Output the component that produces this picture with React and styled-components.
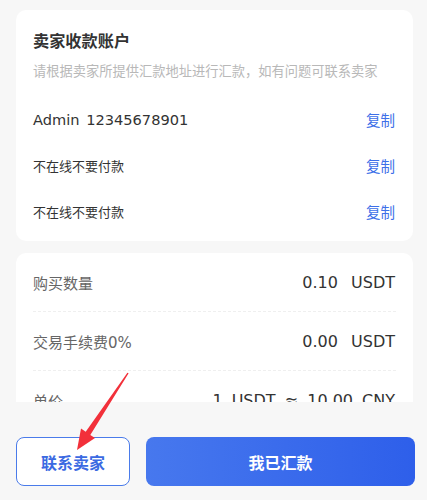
import React from "react";
import styled, { createGlobalStyle } from "styled-components";

const Global = createGlobalStyle`
  html, body { margin: 0; padding: 0; background: #f7f7f7; }
  body { font-family: "DejaVu Sans", "Noto Sans CJK SC", sans-serif; }
  * { box-sizing: border-box; }
`;

const Page = styled.div`
  position: relative;
  width: 427px;
  height: 500px;
  background: #f7f7f7;
  overflow: hidden;
`;

const Scroll = styled.div`
  height: 402px;
  overflow: hidden;
  padding: 10px 14px 0 16px;
  display: flex;
  flex-direction: column;
  gap: 12px;
`;

const Card = styled.div`
  background: #fff;
  border-radius: 10px;
  padding: ${(p) => p.$pad || "0 17px"};
  flex-shrink: 0;
`;

const Title = styled.div`
  font-family: "Noto Sans CJK SC", sans-serif;
  font-size: 16.2px;
  font-weight: 700;
  color: #333;
  line-height: 24px;
`;

const Sub = styled.div`
  font-family: "Noto Sans CJK SC", sans-serif;
  margin-top: 10px;
  margin-bottom: 16px;
  font-size: 13.25px;
  color: #b8b8b8;
  line-height: 18px;
  white-space: nowrap;
`;

const AccRow = styled.div`
  height: 46px;
  display: flex;
  align-items: center;
  justify-content: space-between;
`;

const AccText = styled.span`
  font-size: ${(p) => p.$size || "13px"};
  color: #333;
  word-spacing: ${(p) => p.$ws || "0"};
`;

const Copy = styled.span`
  font-family: "Noto Sans CJK SC", sans-serif;
  font-size: 14.5px;
  color: #3d6fe8;
  margin-right: 1px;
`;

const InfoRow = styled.div`
  height: 59px;
  display: flex;
  align-items: center;
  justify-content: space-between;
  border-bottom: 1px dashed #efefef;
`;

const Label = styled.span`
  font-size: 15px;
  color: #666;
`;

const Value = styled.span`
  font-size: 16px;
  color: #333;
  word-spacing: ${(p) => p.$ws};
  margin-right: 1px;
`;

const Footer = styled.div`
  padding: 35px 12px 0 16px;
  display: flex;
  gap: 16px;
`;

const Btn = styled.button`
  height: 49px;
  border-radius: 8px;
  font-family: "Noto Sans CJK SC", sans-serif;
  font-size: 16px;
  font-weight: 700;
  display: flex;
  align-items: center;
  justify-content: center;
  cursor: pointer;
  ${(p) =>
    p.$primary
      ? `flex: 1; border: none; color: #fff; background: linear-gradient(90deg, #4778ee, #2e5fea);`
      : `width: 114px; border: 1px solid #4a7bea; color: #3b6ae2; background: #fff;`}
`;

const Overlay = styled.svg`
  position: absolute;
  left: 0;
  top: 0;
  pointer-events: none;
`;

const accounts = [
  { text: "Admin 12345678901", size: "14.6px", ws: "2px" },
  { text: "不在线不要付款" },
  { text: "不在线不要付款" },
];

const infos = [
  ["购买数量", "0.10 USDT", "8px"],
  ["交易手续费0%", "0.00 USDT", "8px"],
  ["单价", "1 USDT ≈ 10.00 CNY", "4px"],
];

export default function App() {
  return (
    <Page>
      <Global />
      <Scroll>
        <Card $pad="18px 17px 7px">
          <Title>卖家收款账户</Title>
          <Sub>请根据卖家所提供汇款地址进行汇款，如有问题可联系卖家</Sub>
          {accounts.map((a, i) => (
            <AccRow key={i}>
              <AccText $size={a.size} $ws={a.ws}>{a.text}</AccText>
              <Copy>复制</Copy>
            </AccRow>
          ))}
        </Card>
        <Card>
          {infos.map(([l, v, ws]) => (
            <InfoRow key={l}>
              <Label>{l}</Label>
              <Value $ws={ws}>{v}</Value>
            </InfoRow>
          ))}
        </Card>
      </Scroll>
      <Footer>
        <Btn>联系卖家</Btn>
        <Btn $primary>我已汇款</Btn>
      </Footer>
      <Overlay width="427" height="500" viewBox="0 0 427 500">
        <polygon
          points="128.6,373.3 90.3,434.9 95,438 77,450 81,428.6 85.7,431.7 127.4,372.7"
          fill="#f2303a"
        />
      </Overlay>
    </Page>
  );
}
